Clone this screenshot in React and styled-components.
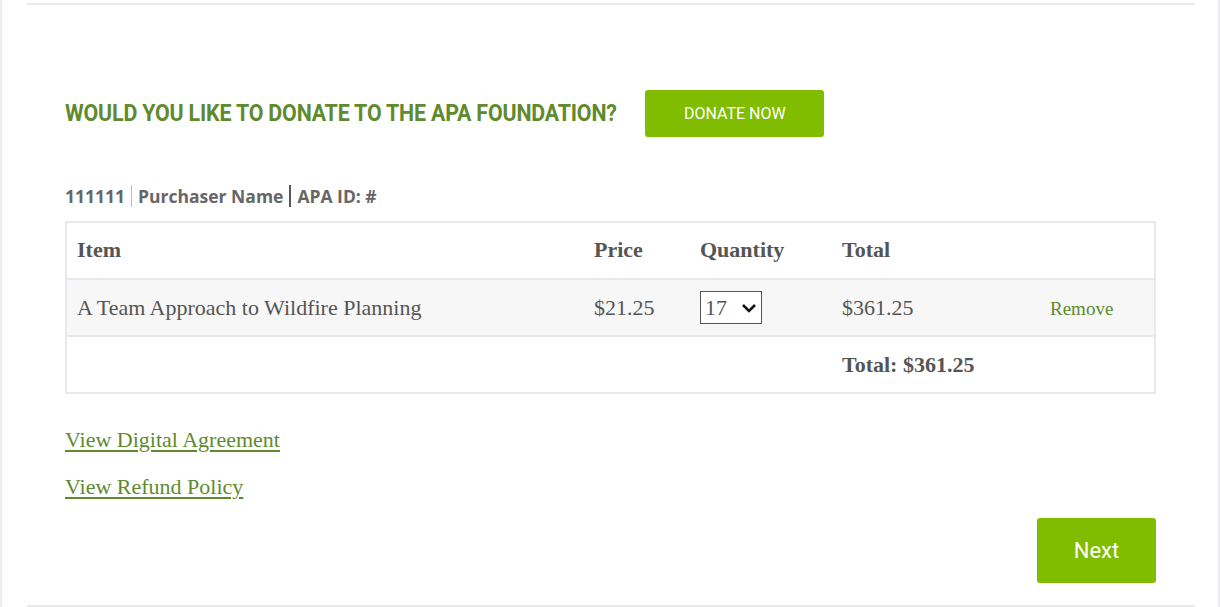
import React from 'react';
import styled, { createGlobalStyle } from 'styled-components';

const Global = createGlobalStyle`
  html, body { margin: 0; padding: 0; background: #fff; }
  body { font-family: "Liberation Serif", serif; }
`;

const green = '#5f8a2e';
const brightGreen = '#80bc00';

const Frame = styled.div`
  width: 1220px;
  height: 607px;
  box-sizing: border-box;
  border-left: 2px solid #ebebf0;
  border-right: 2px solid #ebebf0;
  padding: 3px 23px 0 25px;
  overflow: hidden;
`;

const Rule = styled.hr`
  margin: 0;
  border: 0;
  border-top: 2px solid #e8e9ee;
`;

const Content = styled.div`
  padding: 0 38px;
  height: 600px;
  box-sizing: border-box;
  display: flex;
  flex-direction: column;
`;

const DonateBar = styled.div`
  display: flex;
  align-items: center;
  gap: 25px;
  margin-top: 85px;
`;

const Heading = styled.h2`
  margin: 0;
  font-family: "Roboto", sans-serif;
  font-weight: 700;
  font-size: 23px;
  letter-spacing: -0.2px;
  color: ${green};
  transform: scaleX(0.93);
  transform-origin: left center;
  margin-right: -38px;
`;

const GreenButton = styled.button`
  border: 0;
  border-radius: 3px;
  background: ${brightGreen};
  color: #fff;
  font-family: "Roboto", sans-serif;
  cursor: pointer;
  width: ${p => p.$w}px;
  height: ${p => p.$h}px;
  font-size: ${p => p.$fs}px;
  padding: 0;
`;

const Purchaser = styled.div`
  margin-top: 47px;
  font-family: "Open Sans", sans-serif;
  font-weight: 700;
  font-size: 17.5px;
  color: #666;
  display: flex;
  align-items: center;
`;

const Sep = styled.span`
  display: inline-block;
  width: ${p => p.$w}px;
  height: 22px;
  background: ${p => p.$c};
  margin: 0 6px;
`;

const Table = styled.table`
  margin-top: 13px;
  width: 1091px;
  border-collapse: collapse;
  border: 2px solid #e6e8ec;
  table-layout: fixed;
  color: #555;
  font-size: 22px;
`;

const Row = styled.tr`
  height: 57px;
  background: ${p => (p.$shade ? '#f7f7f7' : '#fff')};
  border-top: 2px solid #e6e8ec;
`;

const Cell = styled.td`
  padding: 0 0 0 10px;
  font-weight: ${p => (p.$bold ? 700 : 400)};
  vertical-align: middle;
  white-space: nowrap;
`;

const HeadCell = styled.th`
  padding: 0 0 2px 10px;
  text-align: left;
  font-weight: 700;
`;

const QtyBox = styled.div`
  width: 62px;
  height: 33px;
  box-sizing: border-box;
  border: 1px solid #555;
  display: flex;
  align-items: center;
  justify-content: space-between;
  padding: 0 4px 0 4px;
  color: #555;
  background: #fff;
`;

const RemoveLink = styled.span`
  color: ${green};
  font-size: 19px;
`;

const Links = styled.div`
  margin-top: 32px;
  display: flex;
  flex-direction: column;
  gap: 20px;
  align-items: flex-start;
`;

const Link = styled.a`
  color: ${green};
  font-size: 22px;
  text-decoration: underline;
  text-underline-offset: 3px;
  line-height: 27px;
`;

const Footer = styled.div`
  display: flex;
  justify-content: flex-end;
  margin-top: 18px;
  width: 1091px;
`;

export default function App() {
  return (
    <>
      <Global />
      <Frame>
        <Rule />
        <Content>
          <DonateBar>
            <Heading>WOULD YOU LIKE TO DONATE TO THE APA FOUNDATION?</Heading>
            <GreenButton $w={179} $h={47} $fs={16}>DONATE NOW</GreenButton>
          </DonateBar>
          <Purchaser>
            <span>111111</span>
            <Sep $w={1} $c="#bbb" />
            <span>Purchaser Name</span>
            <Sep $w={2} $c="#555" />
            <span>APA ID: #</span>
          </Purchaser>
          <Table>
            <colgroup>
              <col style={{ width: 518 }} />
              <col style={{ width: 106 }} />
              <col style={{ width: 142 }} />
              <col style={{ width: 208 }} />
              <col />
            </colgroup>
            <thead>
              <Row>
                <HeadCell>Item</HeadCell>
                <HeadCell>Price</HeadCell>
                <HeadCell>Quantity</HeadCell>
                <HeadCell>Total</HeadCell>
                <HeadCell />
              </Row>
            </thead>
            <tbody>
              <Row $shade>
                <Cell>A Team Approach to Wildfire Planning</Cell>
                <Cell>$21.25</Cell>
                <Cell>
                  <QtyBox>
                    <span>17</span>
                    <svg width="16" height="12" viewBox="0 0 16 12">
                      <path d="M2 3 L8 9 L14 3" fill="none" stroke="#111" strokeWidth="2.6" />
                    </svg>
                  </QtyBox>
                </Cell>
                <Cell>$361.25</Cell>
                <Cell><RemoveLink>Remove</RemoveLink></Cell>
              </Row>
              <Row>
                <Cell />
                <Cell />
                <Cell />
                <Cell $bold>Total: $361.25</Cell>
                <Cell />
              </Row>
            </tbody>
          </Table>
          <Links>
            <Link href="#">View Digital Agreement</Link>
            <Link href="#">View Refund Policy</Link>
          </Links>
          <Footer>
            <GreenButton $w={119} $h={65} $fs={22}>Next</GreenButton>
          </Footer>
        </Content>
        <Rule />
      </Frame>
    </>
  );
}
